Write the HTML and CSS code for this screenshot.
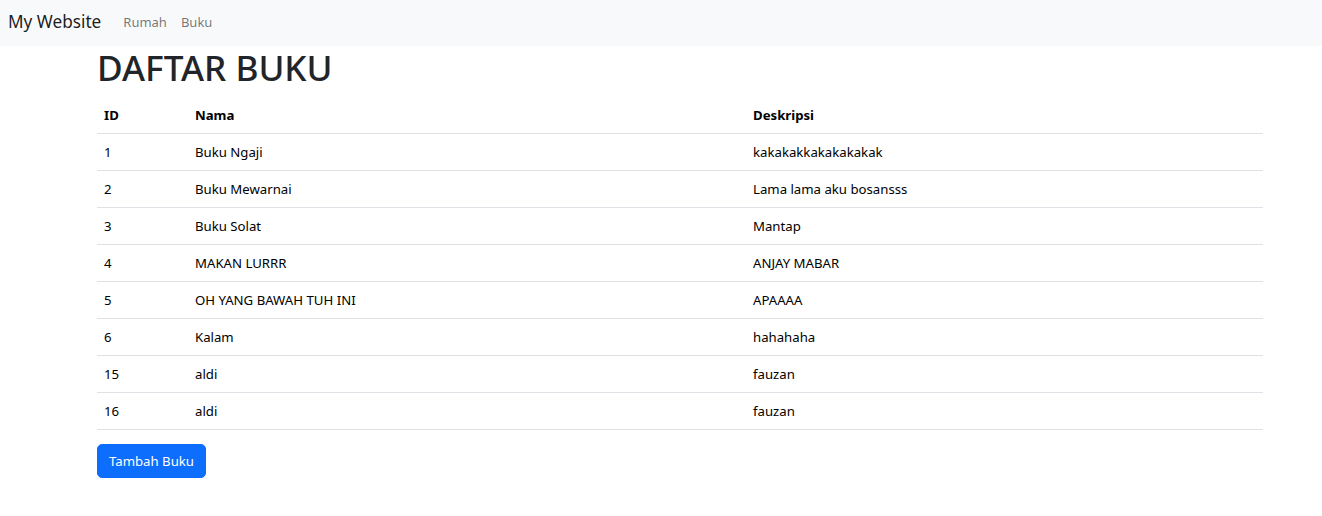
FILE: index.html
```html
<!DOCTYPE html>
<html lang="id">
<head>
  <meta charset="UTF-8">
  <title>Daftar Buku</title>
  <link rel="stylesheet" href="styles.css">
</head>
<body>
  <nav class="navbar">
    <a class="brand" href="#">My Website</a>
    <ul class="nav-links">
      <li><a href="#">Rumah</a></li>
      <li><a href="#">Buku</a></li>
    </ul>
  </nav>

  <div class="container">
    <h1>DAFTAR BUKU</h1>
    <table class="table">
      <colgroup>
        <col class="col-id">
        <col class="col-nama">
        <col>
      </colgroup>
      <thead>
        <tr>
          <th>ID</th>
          <th>Nama</th>
          <th>Deskripsi</th>
        </tr>
      </thead>
      <tbody>
        <tr><td>1</td><td>Buku Ngaji</td><td>kakakakkakakakakak</td></tr>
        <tr><td>2</td><td>Buku Mewarnai</td><td>Lama lama aku bosansss</td></tr>
        <tr><td>3</td><td>Buku Solat</td><td>Mantap</td></tr>
        <tr><td>4</td><td>MAKAN LURRR</td><td>ANJAY MABAR</td></tr>
        <tr><td>5</td><td>OH YANG BAWAH TUH INI</td><td>APAAAA</td></tr>
        <tr><td>6</td><td>Kalam</td><td>hahahaha</td></tr>
        <tr><td>15</td><td>aldi</td><td>fauzan</td></tr>
        <tr><td>16</td><td>aldi</td><td>fauzan</td></tr>
      </tbody>
    </table>
    <button class="btn-primary" type="button">Tambah Buku</button>
  </div>
</body>
</html>
```

FILE: styles.css
```css
body {
  margin: 0;
  font-family: "Noto Sans", "Open Sans", sans-serif;
  font-size: 13.2px;
  line-height: 22px;
  color: #212529;
  background: #fff;
}
a {
  text-decoration: none;
}
.navbar {
  display: flex;
  align-items: center;
  height: 46px;
  padding: 0 8px;
  background: #f8f9fa;
}
.brand {
  font-size: 17.2px;
  color: rgba(0,0,0,0.9);
  margin-right: 15px;
  margin-top: -2px;
}
.nav-links {
  display: flex;
  list-style: none;
  margin: 0;
  padding: 0;
}
.nav-links a {
  display: block;
  padding: 4px 7px;
  font-size: 13px;
  color: rgba(0,0,0,0.55);
  margin-top: -3px;
}
.container {
  margin: 0 59px 0 97px;
}
h1 {
  margin: 0 0 8px;
  font-size: 35.2px;
  font-weight: 500;
  line-height: 43px;
}
.table {
  width: 100%;
  border-collapse: collapse;
  table-layout: fixed;
  margin-bottom: 14px;
}
.col-id {
  width: 91px;
}
.col-nama {
  width: 558px;
}
.table th,
.table td {
  text-align: left;
  padding: 7px 7px;
  border-bottom: 1px solid #dee2e6;
  color: #000;
}
.table th {
  font-weight: 700;
}
.btn-primary {
  font-family: inherit;
  font-size: 13.2px;
  line-height: 22px;
  color: #fff;
  background: #0d6efd;
  border: 1px solid #0d6efd;
  border-radius: 5px;
  padding: 5px 11px;
  cursor: pointer;
}
```
